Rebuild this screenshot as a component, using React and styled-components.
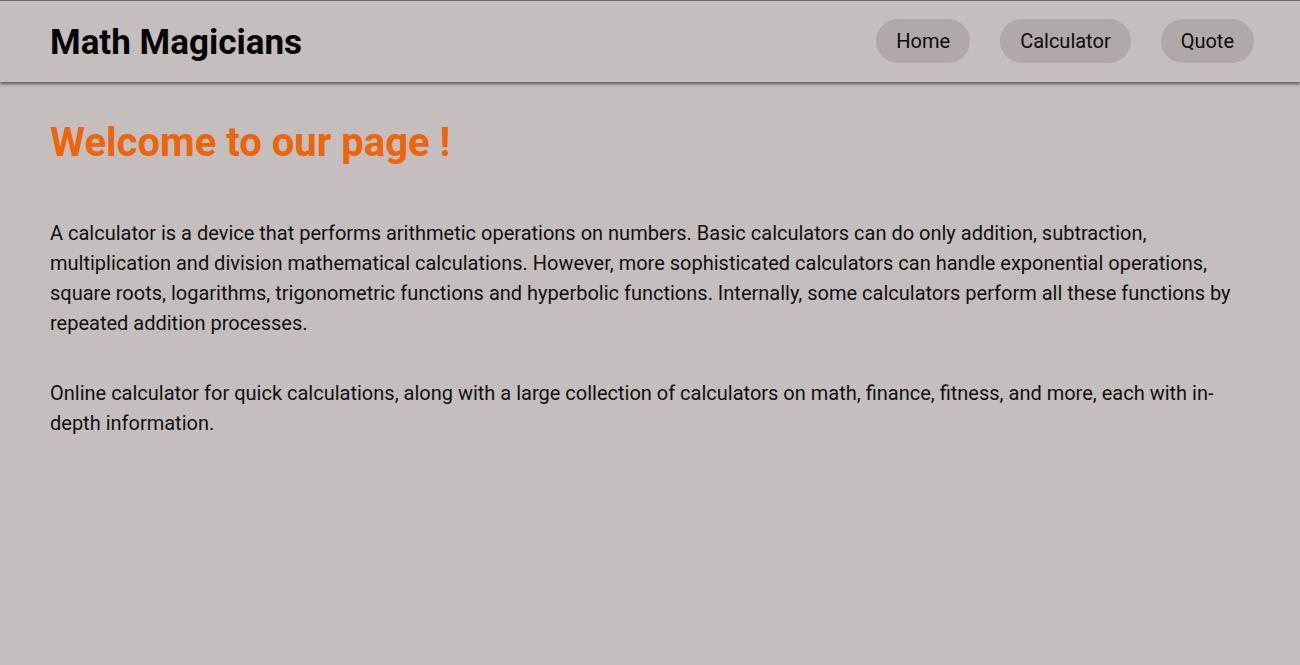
import React from 'react';
import styled, { createGlobalStyle } from 'styled-components';

const GlobalStyle = createGlobalStyle`
  * {
    box-sizing: border-box;
  }

  body {
    margin: 0;
    background: #c4bebe;
    font-family: Roboto, "Liberation Sans", sans-serif;
    color: #111;
  }
`;

const Header = styled.header`
  display: flex;
  justify-content: space-between;
  align-items: center;
  height: 82px;
  padding: 0 46px 2px 50px;
  border-top: 1px solid #6b6868;
  background: #c4bebe;
  box-shadow: 0 2px 3px rgba(60, 55, 55, 0.75);
`;

const Logo = styled.h1`
  margin: 3px 0 0;
  font-size: 35px;
  font-weight: 700;
  color: #050505;
`;

const Nav = styled.nav`
  display: flex;
  gap: 30px;
`;

const NavLink = styled.a`
  display: flex;
  align-items: center;
  justify-content: center;
  height: 44px;
  padding: 0 20px;
  border-radius: 22px;
  background: #b1a9a9;
  color: #0b0b0b;
  font-size: 20px;
  text-decoration: none;
`;

const Main = styled.main`
  padding: 37px 50px 0;
`;

const Title = styled.h2`
  margin: 0 0 52px;
  font-size: 40px;
  font-weight: 700;
  color: #ee6408;
`;

const Paragraph = styled.p`
  margin: 0 0 40px;
  font-size: 20px;
  line-height: 30px;
  color: #101010;
`;

const App = () => {
  return (
    <>
      <GlobalStyle />
      <Header>
        <Logo>Math Magicians</Logo>
        <Nav>
          <NavLink href="#">Home</NavLink>
          <NavLink href="#">Calculator</NavLink>
          <NavLink href="#">Quote</NavLink>
        </Nav>
      </Header>
      <Main>
        <Title>Welcome to our page !</Title>
        <Paragraph>
          A calculator is a device that performs arithmetic operations on numbers. Basic calculators can do only addition, subtraction, multiplication and division mathematical calculations. However, more sophisticated calculators can handle exponential operations, square roots, logarithms, trigonometric functions and hyperbolic functions. Internally, some calculators perform all these functions by repeated addition processes.
        </Paragraph>
        <Paragraph>
          Online calculator for quick calculations, along with a large collection of calculators on math, finance, fitness, and more, each with in-depth information.
        </Paragraph>
      </Main>
    </>
  );
};

export default App;
